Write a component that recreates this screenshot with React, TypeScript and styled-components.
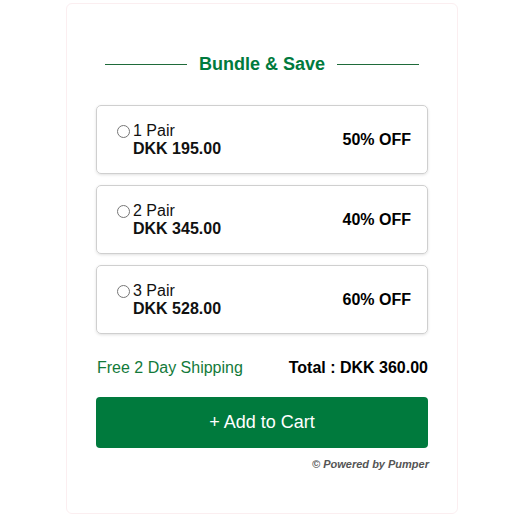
import styled, { createGlobalStyle } from "styled-components";

const GlobalStyle = createGlobalStyle`
    body {
        margin: 0;
        background: #fff;
        font-family: "Liberation Sans", Arial, sans-serif;
    }
`

const Page = styled.div`
    padding: 3px 0 0 66px;
`

const Card = styled.div`
    width: 392px;
    height: 511px;
    border: 1px solid #fbeef0;
    border-radius: 6px;
    box-sizing: border-box;
    padding: 50px 29px 0 29px;
    display: flex;
    flex-direction: column;
`

const TitleRow = styled.div`
    display: flex;
    align-items: center;
    justify-content: center;
    gap: 12px;
    margin-bottom: 30px;
`

const Line = styled.div`
    width: 82px;
    height: 1px;
    background: #1f6b3a;
`

const Title = styled.span`
    color: #007a3d;
    font-size: 18px;
    font-weight: 700;
`

const Options = styled.div`
    display: flex;
    flex-direction: column;
    gap: 11px;
`

const Option = styled.label`
    height: 69px;
    box-sizing: border-box;
    border: 1px solid #cfcfcf;
    border-radius: 5px;
    box-shadow: 0 1px 3px rgba(0, 0, 0, 0.12);
    display: flex;
    align-items: center;
    justify-content: space-between;
    padding: 0 16px 0 20px;
    cursor: pointer;
`

const Left = styled.div`
    display: flex;
    align-items: flex-start;
`

const Radio = styled.input`
    width: 13px;
    height: 13px;
    margin: 3px 3px 0 0;
`

const Info = styled.div`
    display: flex;
    flex-direction: column;
    color: #111;
`

const Qty = styled.span`
    font-size: 16px;
    line-height: 18px;
`

const Price = styled.span`
    font-size: 16px;
    font-weight: 700;
    line-height: 18px;
`

const Discount = styled.span`
    font-size: 16px;
    font-weight: 700;
    color: #000;
`

const Summary = styled.div`
    display: flex;
    justify-content: space-between;
    align-items: center;
    margin-top: 25px;
    font-size: 16px;
`

const Shipping = styled.span`
    color: #137a3a;
    margin-left: 1px;
`

const Total = styled.span`
    font-weight: 700;
    color: #000;
`

const CartButton = styled.button`
    margin-top: 20px;
    height: 51px;
    border: none;
    border-radius: 4px;
    background: #007a3d;
    color: #fff;
    font-family: "Liberation Sans", Arial, sans-serif;
    font-size: 18px;
    cursor: pointer;
`

const Powered = styled.div`
    text-align: right;
    margin-top: 10px;
    margin-right: -1px;
    font-size: 11px;
    font-style: italic;
    font-weight: 700;
    color: #555;
`

const bundles = [
    { qty: "1 Pair", price: "DKK 195.00", off: "50% OFF" },
    { qty: "2 Pair", price: "DKK 345.00", off: "40% OFF" },
    { qty: "3 Pair", price: "DKK 528.00", off: "60% OFF" },
]

export default function App() {
    return (
        <>
            <GlobalStyle />
            <Page>
                <Card>
                    <TitleRow>
                        <Line />
                        <Title>Bundle &amp; Save</Title>
                        <Line />
                    </TitleRow>
                    <Options>
                        {bundles.map((b) => (
                            <Option key={b.qty}>
                                <Left>
                                    <Radio type="radio" name="bundle" />
                                    <Info>
                                        <Qty>{b.qty}</Qty>
                                        <Price>{b.price}</Price>
                                    </Info>
                                </Left>
                                <Discount>{b.off}</Discount>
                            </Option>
                        ))}
                    </Options>
                    <Summary>
                        <Shipping>Free 2 Day Shipping</Shipping>
                        <Total>Total : DKK 360.00</Total>
                    </Summary>
                    <CartButton>+ Add to Cart</CartButton>
                    <Powered>© Powered by Pumper</Powered>
                </Card>
            </Page>
        </>
    )
}
